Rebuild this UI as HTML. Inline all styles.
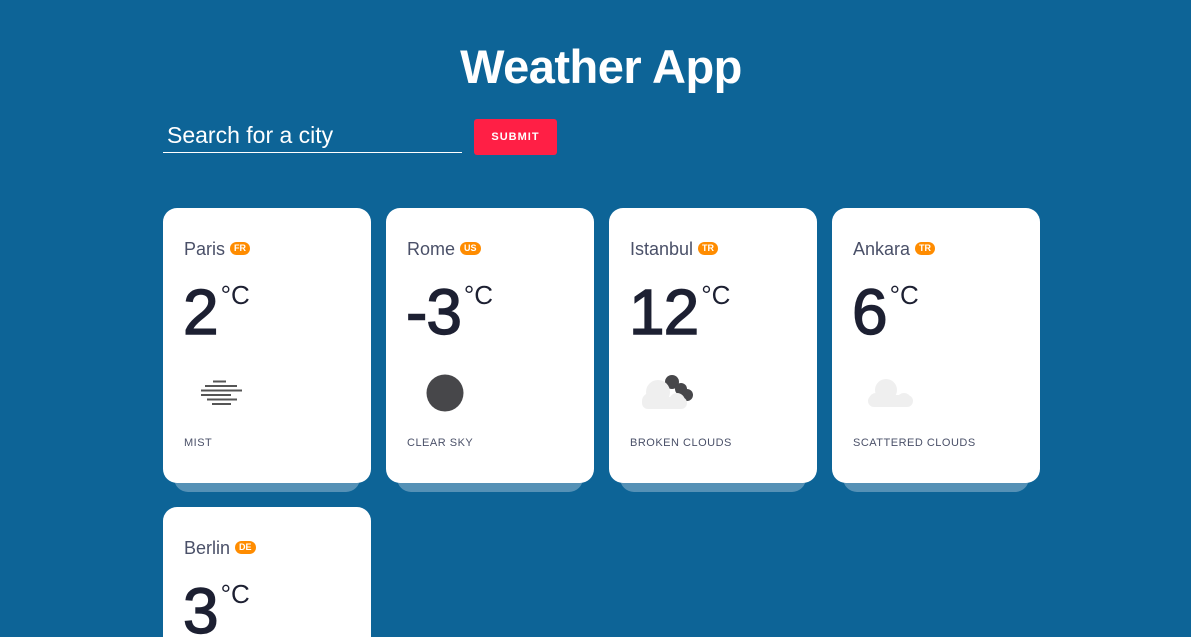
<!DOCTYPE html>
<html><head><style>
html,body{margin:0;width:1191px;height:637px;overflow:hidden}
body{background:#0d6497;font-family:"Liberation Sans",sans-serif;position:relative}
h1{position:absolute;left:0;width:1202px;top:39px;margin:0;text-align:center;color:#fff;font-size:47px;font-weight:bold;letter-spacing:-0.5px}
.inp{position:absolute;left:163px;top:119px;width:299px;height:33px;border-bottom:1px solid #fff;color:#fff;font-size:23px}
.inp span{position:absolute;left:4px;top:3px}
.btn{position:absolute;left:474px;top:119px;width:83px;height:36px;background:#ff1f45;border-radius:3px;color:#fff;font-size:11px;font-weight:bold;letter-spacing:1px;text-align:center;line-height:37px}
.card{position:absolute;width:208px;height:275px}
.card .sh{position:absolute;left:11px;right:11px;top:20px;bottom:-9px;background:#5591b6;border-radius:0 0 14px 14px}
.card .bg{position:absolute;inset:0;background:#fff;border-radius:14px}
.name{position:absolute;left:21px;top:31px;font-size:18px;color:#4a5068}
.name b{display:inline-block;vertical-align:4px;margin-left:5px;background:#ff8c00;color:#fff;font-size:9px;line-height:13px;padding:0 4px;border-radius:7px;font-weight:bold}
.temp{position:absolute;left:20px;top:67px;font-size:64px;color:#1d2032;letter-spacing:-1px;-webkit-text-stroke:1.4px #1d2032}
.temp sup{font-size:26px;vertical-align:30px;margin-left:3px;letter-spacing:0;-webkit-text-stroke:0}
.desc{position:absolute;left:21px;font-size:11px;color:#4a5068;letter-spacing:0.5px}
</style></head><body>
<h1>Weather App</h1>
<div class="inp"><span>Search for a city</span></div>
<div class="btn">SUBMIT</div>

<div class="card" style="left:163px;top:208px"><div class="sh"></div><div class="bg"></div>
<div class="name">Paris<b>FR</b></div><div class="temp">2<sup>°C</sup></div>
<svg style="position:absolute;left:0;top:160px" width="100" height="60" viewBox="0 160 100 60"><g stroke="#555" stroke-width="2"><line x1="50" y1="173.5" x2="63" y2="173.5"/><line x1="38" y1="182.5" x2="79" y2="182.5"/><line x1="38" y1="187" x2="68" y2="187"/><line x1="44" y1="191.5" x2="74" y2="191.5"/><line x1="49" y1="196" x2="68" y2="196"/><line x1="42" y1="178" x2="74" y2="178"/></g></svg>
<div class="desc" style="top:229px">MIST</div></div>

<div class="card" style="left:386px;top:208px"><div class="sh"></div><div class="bg"></div>
<div class="name">Rome<b>US</b></div><div class="temp">-3<sup>°C</sup></div>
<svg style="position:absolute;left:0;top:160px" width="100" height="60"><circle cx="59" cy="25" r="18.5" fill="#47474a"/></svg>
<div class="desc" style="top:229px">CLEAR SKY</div></div>

<div class="card" style="left:609px;top:208px"><div class="sh"></div><div class="bg"></div>
<div class="name">Istanbul<b>TR</b></div><div class="temp">12<sup>°C</sup></div>
<svg style="position:absolute;left:21px;top:160px" width="70" height="50" viewBox="0 0 70 50"><g fill="#47474a"><circle cx="42" cy="14" r="7"/><circle cx="51" cy="21" r="6"/><circle cx="57" cy="27" r="6"/></g><g fill="#efefef"><circle cx="28" cy="24" r="12"/><circle cx="20" cy="33" r="8"/><circle cx="47" cy="33" r="8"/><rect x="12" y="29" width="45" height="12" rx="6"/></g></svg>
<div class="desc" style="top:229px">BROKEN CLOUDS</div></div>

<div class="card" style="left:832px;top:208px"><div class="sh"></div><div class="bg"></div>
<div class="name">Ankara<b>TR</b></div><div class="temp">6<sup>°C</sup></div>
<svg style="position:absolute;left:21px;top:160px" width="70" height="50" viewBox="0 0 70 50"><g fill="#efefef"><circle cx="33" cy="22" r="11"/><circle cx="23" cy="32" r="7"/><circle cx="51" cy="32" r="7"/><rect x="15" y="27" width="45" height="12" rx="6"/></g></svg>
<div class="desc" style="top:229px">SCATTERED CLOUDS</div></div>

<div class="card" style="left:163px;top:507px"><div class="sh"></div><div class="bg"></div>
<div class="name">Berlin<b>DE</b></div><div class="temp">3<sup>°C</sup></div></div>
</body></html>
